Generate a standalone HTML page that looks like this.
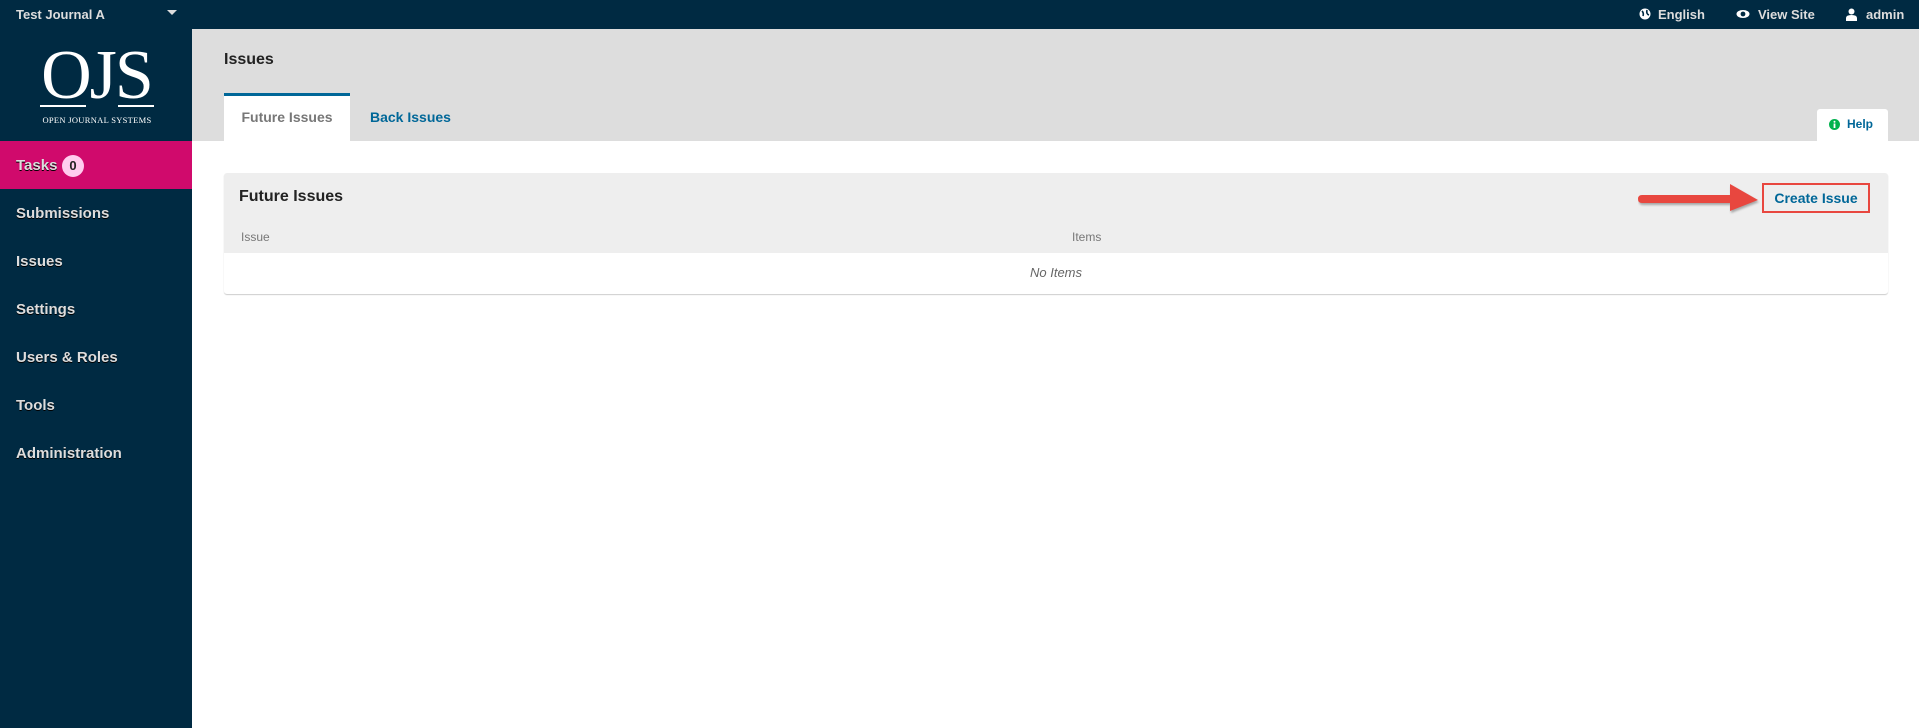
<!DOCTYPE html>
<html><head><meta charset="utf-8"><style>
*{margin:0;padding:0;box-sizing:border-box}
body{width:1919px;height:728px;overflow:hidden;background:#fff;font-family:"Liberation Sans",sans-serif;position:relative}
.top{position:absolute;left:0;top:0;width:1919px;height:29px;background:#002a42;color:#ddd;font-weight:bold;font-size:13px}
.top span{position:absolute;top:7px}
.side{position:absolute;left:0;top:29px;width:192px;height:699px;background:#002a42}
.hdr{position:absolute;left:192px;top:29px;width:1727px;height:112px;background:#ddd}
.abs{position:absolute}
.nav{position:absolute;left:16px;color:#ddd;font-weight:bold;font-size:15px;text-shadow:0 1px 0 #000}
</style></head><body>
<div class="top">
<span style="left:16px">Test Journal A</span>
<svg class="abs" style="left:167px;top:10px" width="10" height="6"><path d="M0 0H10L5 5Z" fill="#ddd"/></svg>
<svg class="abs" style="left:1639px;top:8px" width="12" height="12"><circle cx="6" cy="6" r="5.5" fill="#fff"/><path d="M3 3 Q5 5 4 8 M8 2 Q7 6 10 7" stroke="#002a42" stroke-width="1.6" fill="none"/></svg>
<span style="left:1658px">English</span>
<svg class="abs" style="left:1736px;top:9px" width="14" height="10"><ellipse cx="7" cy="5" rx="6.5" ry="4" fill="#fff"/><circle cx="7" cy="5" r="2.4" fill="#002a42"/></svg>
<span style="left:1758px">View Site</span>
<svg class="abs" style="left:1846px;top:8px" width="11" height="13"><circle cx="5.5" cy="3.5" r="3" fill="#fff"/><path d="M0 13V10Q0 7 5.5 7Q11 7 11 10V13Z" fill="#fff"/></svg>
<span style="left:1866px">admin</span>
</div>
<div class="side">
<div class="abs" style="left:38px;top:16px;width:117px;text-align:center;color:#fff;font-family:'Liberation Serif',serif;font-size:70px;line-height:62px;letter-spacing:-2px">OJS</div>
<div class="abs" style="left:40px;top:76px;width:46px;height:2px;background:#fff"></div>
<div class="abs" style="left:118px;top:76px;width:36px;height:2px;background:#fff"></div>
<div class="abs" style="left:38px;top:86px;width:118px;text-align:center;color:#fff;font-family:'Liberation Serif',serif;font-size:8.5px;letter-spacing:.3px">OPEN JOURNAL SYSTEMS</div>
<div class="abs" style="left:0;top:112px;width:192px;height:48px;background:#d00a6c"></div>
<div class="nav" style="top:128px">Tasks</div>
<div class="abs" style="left:62px;top:126px;width:22px;height:22px;border-radius:11px;background:#fce;color:#222;font-weight:bold;font-size:13px;text-align:center;line-height:22px">0</div>
<div class="nav" style="top:176px">Submissions</div>
<div class="nav" style="top:224px">Issues</div>
<div class="nav" style="top:272px">Settings</div>
<div class="nav" style="top:320px">Users &amp; Roles</div>
<div class="nav" style="top:368px">Tools</div>
<div class="nav" style="top:416px">Administration</div>
</div>
<div class="hdr">
<div class="abs" style="left:32px;top:22px;font-size:16px;font-weight:bold;color:#222">Issues</div>
<div class="abs" style="left:32px;top:64px;width:126px;height:48px;background:#fff;border-top:3px solid #006798"></div>
<div class="abs" style="left:32px;top:80px;width:126px;text-align:center;font-size:14px;font-weight:bold;color:#777">Future Issues</div>
<div class="abs" style="left:178px;top:80px;font-size:14px;font-weight:bold;color:#006798">Back Issues</div>
<div class="abs" style="left:1625px;top:80px;width:71px;height:32px;background:#fff;border-radius:3px 3px 0 0"></div>
<svg class="abs" style="left:1637px;top:90px" width="11" height="11"><circle cx="5.5" cy="5.5" r="5.5" fill="#00b24e"/><rect x="4.6" y="4.5" width="1.8" height="4.5" fill="#fff"/><circle cx="5.5" cy="2.8" r="1" fill="#fff"/></svg>
<div class="abs" style="left:1655px;top:88px;font-size:12px;font-weight:bold;color:#006798">Help</div>
</div>
<div class="abs" style="left:224px;top:173px;width:1664px;height:121px;border-radius:3px;box-shadow:0 1px 1px #ccc;overflow:hidden">
<div class="abs" style="left:0;top:0;width:1664px;height:80px;background:#eee"></div>
<div class="abs" style="left:15px;top:15px;font-size:16px;font-weight:bold;color:#222">Future Issues</div>
<div class="abs" style="left:17px;top:57px;font-size:12px;color:#777">Issue</div>
<div class="abs" style="left:848px;top:57px;font-size:12px;color:#777">Items</div>
<div class="abs" style="left:0;top:80px;width:1664px;height:40px;background:#fff;text-align:center;line-height:40px;font-size:13px;font-style:italic;color:#666">No Items</div>
<div class="abs" style="left:1538px;top:10px;width:108px;height:30px;border:2px solid #e8473f;text-align:center;line-height:26px;font-size:14px;font-weight:bold;color:#006798">Create Issue</div>
<svg class="abs" style="left:1414px;top:8px" width="122" height="34"><path d="M4 14H92V3L120 19L92 30V22H4Q0 22 0 18Q0 14 4 14Z" fill="#e8473f" style="filter:drop-shadow(1px 2px 1px rgba(0,0,0,.3))"/></svg>
</div>
</body></html>
